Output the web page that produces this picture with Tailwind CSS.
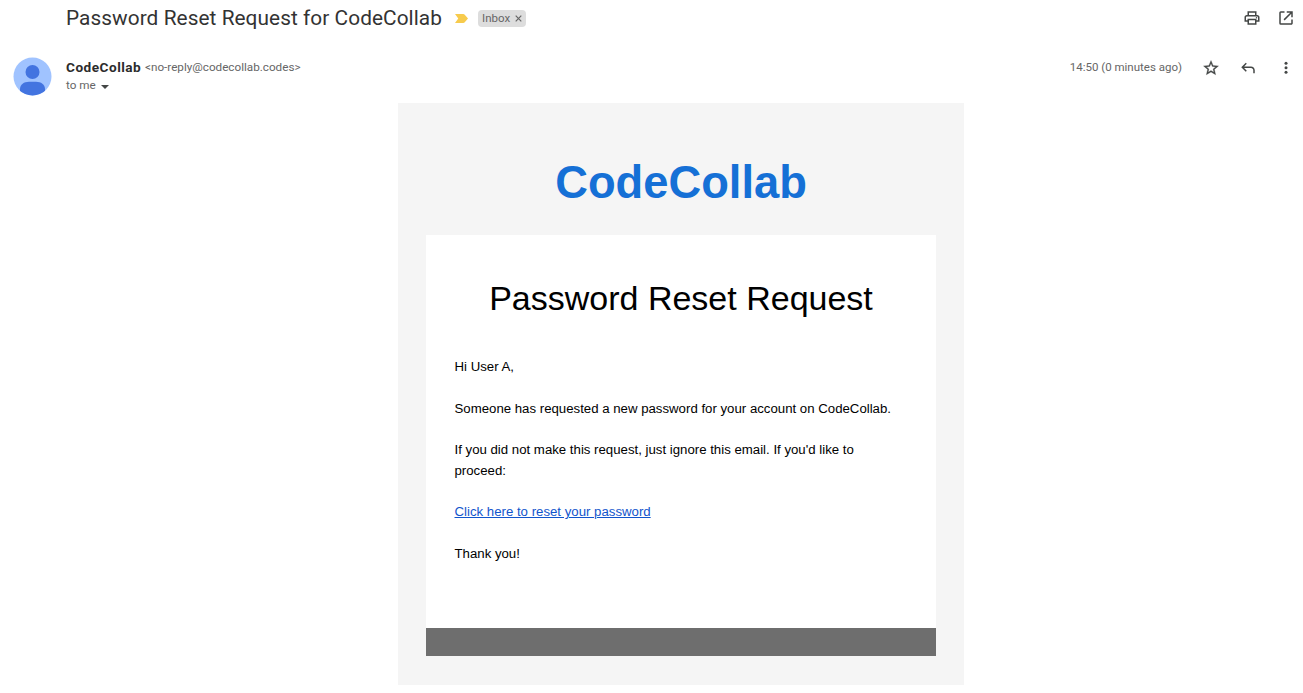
<!DOCTYPE html>
<html lang="en">
<head>
<meta charset="utf-8">
<title>Password Reset Request for CodeCollab</title>
<script src="https://cdn.jsdelivr.net/npm/@tailwindcss/browser@4"></script>
</head>
<body class="h-[693px] w-[1303px] overflow-hidden bg-white font-['Roboto',sans-serif]">
<header class="flex h-9 items-center pl-[66px] pr-2">
  <h1 class="w-[376px] text-[20.8px] leading-7 tracking-[.07px] whitespace-nowrap text-[#333]">Password Reset Request for CodeCollab</h1>
  <svg class="ml-[13px] h-[9px] w-[13px]" viewBox="0 0 12 9" preserveAspectRatio="none" fill="#f7cb4d"><path d="M0 0h7.6q.9 0 1.4.7L12 4.5 9 8.3q-.5.7-1.4.7H0l3-4.500z"/></svg>
  <div class="ml-[10px] flex h-[17px] w-12 items-center rounded-[4px] bg-[#ddd] pl-1 text-[11.5px] text-[#666]"><span class="mt-[2px]">Inbox</span>
    <svg class="ml-[5px] mt-px h-[7px] w-[7px]" viewBox="0 0 7 7" stroke="#666" stroke-width="1.2"><path d="M.7.7l5.600 5.600M6.300.7L.7 6.300"/></svg></div>
  <div class="ml-auto flex gap-4 text-[#444746]">
    <svg class="h-[18px] w-[18px]" viewBox="0 0 24 24" fill="currentColor"><path d="M19 8h-1V3H6v5H5c-1.660 0-3 1.340-3 3v6h4v4h12v-4h4v-6c0-1.660-1.340-3-3-3zM8 5h8v3H8V5zm8 14H8v-4h8v4zm2-4v-2H6v2H4v-4c0-.55.45-1 1-1h14c.55 0 1 .45 1 1v4h-2z"/><circle cx="18" cy="11.500" r="1"/></svg>
    <svg class="h-[18px] w-[18px]" viewBox="0 0 24 24" fill="currentColor"><path d="M19 19H5V5h5V3H5a2 2 0 0 0-2 2v14a2 2 0 0 0 2 2h14c1.100 0 2-.9 2-2v-5h-2v5zM13 3v2h4.590l-8.830 8.830 1.410 1.410L19 6.410V11h2V3h-8z"/></svg>
  </div>
</header>
<section class="flex h-[67px] pl-[13px] pr-2 pt-[21px]">
  <svg class="h-[39px] w-[39px]" viewBox="0 0 39 39"><defs><clipPath id="avatar"><circle cx="19.500" cy="19.500" r="19"/></clipPath></defs><circle cx="19.500" cy="19.500" r="19" fill="#a0c3ff"/><g clip-path="url(#avatar)" fill="#4374e0"><circle cx="19.500" cy="15" r="7"/><path d="M7 39v-7c0-4.500 4-7.300 9-7.300h7c5 0 9 2.800 9 7.300v7z"/></g></svg>
  <div class="ml-[14px] whitespace-nowrap text-[11.7px] text-[#666]">
    <div class="flex h-5 items-center pt-px"><span class="w-[76px] text-[13.6px] font-bold tracking-[.5px] text-[#2c2c2c]">CodeCollab</span><span class="ml-[3px] mt-px">&lt;no-reply@codecollab.codes&gt;</span></div>
    <div class="flex h-[18px] items-center">to me<svg class="ml-[5px] mt-px h-1 w-2" viewBox="0 0 8 4" fill="#444746"><path d="M0 0h8L4 4z"/></svg></div>
  </div>
  <div class="ml-auto flex h-[21px] items-center text-[#444746]">
    <span class="pt-px text-[11.5px] text-[#666]">14:50 (0 minutes ago)</span>
    <svg class="ml-5 h-[18px] w-[18px]" viewBox="0 0 24 24" fill="currentColor" stroke="currentColor" stroke-width=".4"><path d="M22 9.240l-7.190-.62L12 2 9.190 8.630 2 9.240l5.460 4.730L5.820 21 12 17.270 18.180 21l-1.630-7.030L22 9.240zM12 15.400l-3.760 2.270 1-4.280-3.320-2.880 4.380-.38L12 6.100l1.710 4.040 4.380.38-3.320 2.880 1 4.280L12 15.400z"/></svg>
    <svg class="ml-[19px] h-[18px] w-[18px]" viewBox="0 0 24 24" fill="currentColor"><path d="M19 19v-4c0-1.660-1.340-3-3-3H6.830l3.580 3.590L9 17l-6-6 6-6 1.410 1.410L6.830 10H16c2.760 0 5 2.240 5 5v4h-2z"/></svg>
    <svg class="ml-5 h-[18px] w-[18px]" viewBox="0 0 24 24" fill="currentColor"><circle cx="12" cy="5.500" r="2"/><circle cx="12" cy="11.500" r="2"/><circle cx="12" cy="17.500" r="2"/></svg>
  </div>
</section>
<main class="ml-[398px] flex h-[582px] w-[566px] flex-col bg-[#f5f5f5] px-7 font-['Liberation_Sans',Arial,sans-serif]">
  <div class="flex h-[132px] items-center justify-center pt-[27px] text-[45.3px] font-bold text-[#1570d6]">CodeCollab</div>
  <article class="h-[393px] bg-white px-[28.500px] pt-[39px] text-[13.220px] leading-[20.770px] text-black">
    <h2 class="mb-[34px] text-center text-[34px] leading-[49px] whitespace-nowrap">Password Reset Request</h2>
    <p class="mb-[20.770px]">Hi User A,</p>
    <p class="mb-[20.770px]">Someone has requested a new password for your account on CodeCollab.</p>
    <p class="mb-[20.770px]">If you did not make this request, just ignore this email. If you'd like to<br>proceed:</p>
    <p class="mb-[20.770px]"><a class="text-[#15c] underline" href="#">Click here to reset your password</a></p>
    <p>Thank you!</p>
  </article>
  <footer class="h-7 bg-[#6e6e6e]"></footer>
</main>
</body>
</html>
